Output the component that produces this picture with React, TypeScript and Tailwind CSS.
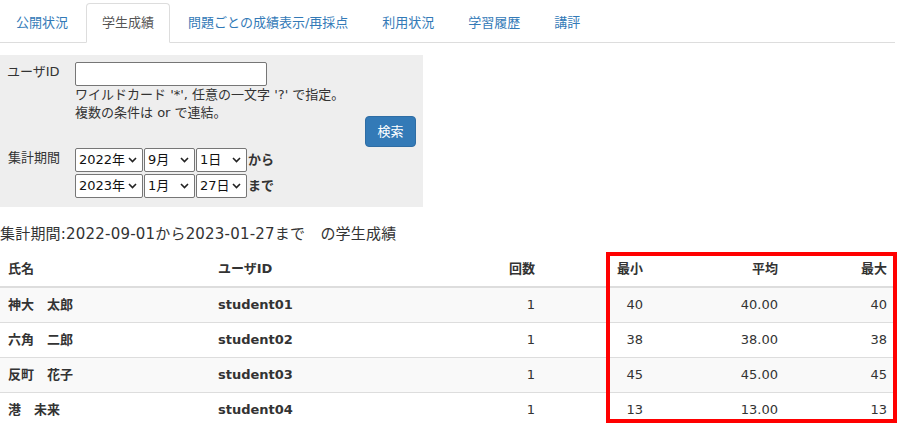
import React from "react";

const tabs = ["公開状況", "学生成績", "問題ごとの成績表示/再採点", "利用状況", "学習履歴", "講評"];

const rows = [
  { name: "神大　太郎", id: "student01", count: 1, min: 40, avg: "40.00", max: 40 },
  { name: "六角　二郎", id: "student02", count: 1, min: 38, avg: "38.00", max: 38 },
  { name: "反町　花子", id: "student03", count: 1, min: 45, avg: "45.00", max: 45 },
  { name: "港　未来", id: "student04", count: 1, min: 13, avg: "13.00", max: 13 },
];

function Chevron() {
  return (
    <svg width="9" height="6" viewBox="0 0 9 6" className="shrink-0">
      <polyline points="1,1 4.5,4.5 8,1" fill="none" stroke="#222" strokeWidth="1.6" />
    </svg>
  );
}

function FakeSelect({ value, width }: { value: string; width: string }) {
  return (
    <div
      className={`flex h-[24px] ${width} items-center justify-between rounded-[2px] border border-[#767676] bg-white pl-[3px] pr-[5px] text-[13px] text-[#111]`}
    >
      <span>{value}</span>
      <Chevron />
    </div>
  );
}

export default function App() {
  return (
    <div
      className="w-[895px] bg-white text-[13px] leading-[18px] text-[#333]"
      style={{ fontFamily: '"DejaVu Sans", "Noto Sans CJK JP", sans-serif' }}
    >
      {/* Tabs */}
      <div className="flex border-b border-[#ddd] pt-[3px]">
        {tabs.map((tab, i) => (
          <div
            key={tab}
            className={`-mb-px mr-[2px] flex h-[40px] items-center rounded-t-[4px] border px-[15px] ${
              i === 1
                ? "border-[#ddd] border-b-white bg-white text-[#555]"
                : "border-transparent text-[#337ab7]"
            }`}
          >
            {tab}
          </div>
        ))}
      </div>

      {/* Search panel */}
      <div className="mt-[12px] flex h-[152px] w-[423px] bg-[#eee] pl-[7px] pr-[7px] pt-[7px]">
        <div className="flex flex-1 flex-col">
          <div className="flex">
            <div className="w-[68px] pt-[1px]">ユーザID</div>
            <div className="flex flex-col">
              <div className="h-[24px] w-[192px] rounded-[2px] border border-[#767676] bg-white" />
              <div>ワイルドカード '*', 任意の一文字 '?' で指定。</div>
              <div>複数の条件は or で連結。</div>
            </div>
          </div>
          <div className="mt-[26px] flex">
            <div className="w-[68px] pl-[1px] pt-[1px]">集計期間</div>
            <div className="flex flex-col gap-[2px]">
              <div className="flex items-center gap-[1px]">
                <FakeSelect value="2022年" width="w-[68px]" />
                <FakeSelect value="9月" width="w-[51px]" />
                <FakeSelect value="1日" width="w-[51px]" />
                <span className="font-bold">から</span>
              </div>
              <div className="flex items-center gap-[1px]">
                <FakeSelect value="2023年" width="w-[68px]" />
                <FakeSelect value="1月" width="w-[51px]" />
                <FakeSelect value="27日" width="w-[51px]" />
                <span className="font-bold">まで</span>
              </div>
            </div>
          </div>
        </div>
        <div className="pt-[54px]">
          <button className="h-[31px] w-[51px] rounded-[4px] border border-[#2e6da4] bg-[#337ab7] text-[13px] text-white">
            検索
          </button>
        </div>
      </div>

      {/* Heading */}
      <div className="mt-[16px] text-[15px] leading-[22px] tracking-[0.2px]">
        集計期間:2022-09-01から2023-01-27まで　の学生成績
      </div>

      {/* Result table */}
      <div className="relative mt-[7px]">
        <table className="w-[895px] table-fixed border-collapse">
          <colgroup>
            <col className="w-[210px]" />
            <col className="w-[210px]" />
            <col className="w-[123px]" />
            <col className="w-[108px]" />
            <col className="w-[135px]" />
            <col className="w-[109px]" />
          </colgroup>
          <thead>
            <tr className="border-b-2 border-[#ddd] font-bold">
              <th className="h-[35px] px-[8px] text-left">氏名</th>
              <th className="px-[8px] text-left">ユーザID</th>
              <th className="px-[8px] text-right">回数</th>
              <th className="px-[8px] text-right">最小</th>
              <th className="px-[8px] text-right">平均</th>
              <th className="px-[8px] text-right">最大</th>
            </tr>
          </thead>
          <tbody>
            {rows.map((r, i) => (
              <tr
                key={r.id}
                className={`border-t border-[#ddd] ${i % 2 === 0 ? "bg-[#f9f9f9]" : "bg-white"}`}
              >
                <td className="h-[35px] px-[8px] font-bold">{r.name}</td>
                <td className="px-[8px] font-bold">{r.id}</td>
                <td className="px-[8px] text-right">{r.count}</td>
                <td className="px-[8px] text-right">{r.min}</td>
                <td className="px-[8px] text-right">{r.avg}</td>
                <td className="px-[8px] text-right">{r.max}</td>
              </tr>
            ))}
          </tbody>
        </table>
        {/* Annotation frame */}
        <div className="pointer-events-none absolute left-[606px] top-0 h-[171px] w-[291px] border-4 border-[#ff0000]" />
      </div>
    </div>
  );
}
